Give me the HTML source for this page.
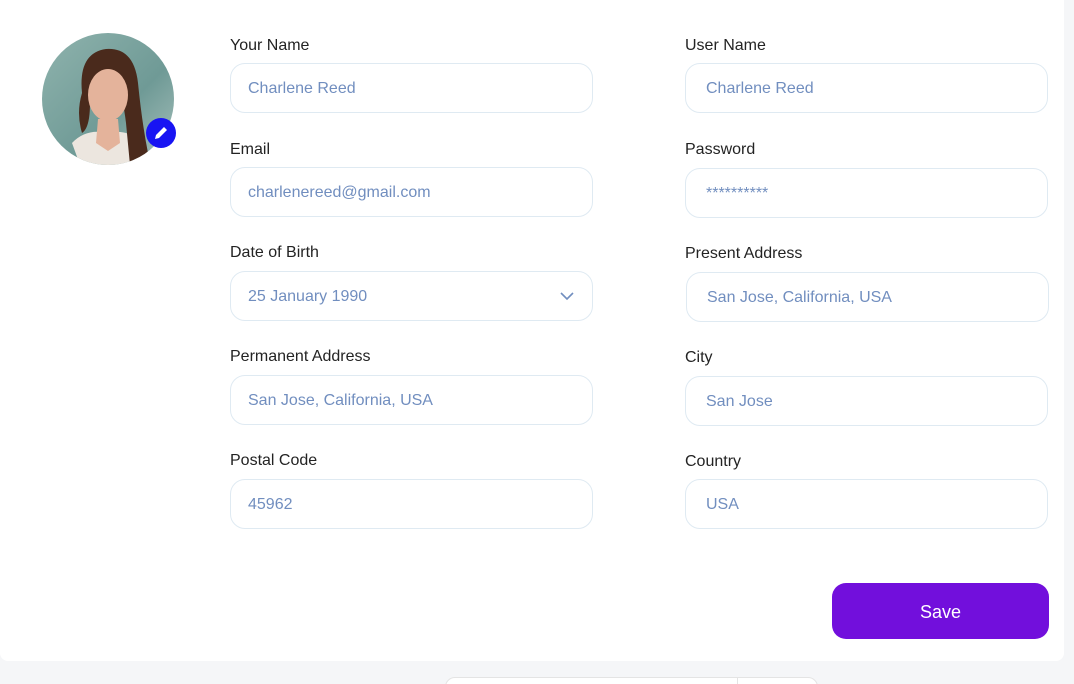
<!DOCTYPE html>
<html><head><meta charset="utf-8"><style>
*{box-sizing:border-box;margin:0;padding:0}
html,body{width:1074px;height:684px;overflow:hidden}
body{background:#f5f6f8;font-family:"Liberation Sans",sans-serif;position:relative}
.card{position:absolute;left:0;top:-20px;width:1064px;height:681px;background:#fff;border-radius:0 0 8px 8px}
.lbl{position:absolute;font-size:16px;color:#232323}
.in{position:absolute;width:363px;height:50px;border:1px solid #dfeaf2;border-radius:15px;font-size:16px;color:#718ebf;padding-left:17px;line-height:50px}
.av{position:absolute;left:42px;top:33px;width:132px;height:132px;border-radius:50%;overflow:hidden;background:linear-gradient(135deg,#8fb3ad,#6f9a96 60%,#a9c2bd)}
.btn{position:absolute;left:832px;top:583px;width:217px;height:56px;border-radius:14px;background:#720fdc;color:#fff;font-size:18px;text-align:center;line-height:58px}
.bot{position:absolute;left:445px;top:677px;width:373px;height:20px;background:#fff;border:1px solid #e4e4e4;border-radius:16px}
</style></head><body>
<div class="card"></div>
<div class="av">
<svg width="132" height="132" viewBox="0 0 132 132">
<path d="M38 132 L30 110 Q44 95 66 100 Q88 95 100 112 L96 132Z" fill="#ece6df"/>
<path d="M40 60 Q36 20 64 16 Q92 14 96 50 Q100 90 106 120 Q100 132 88 132 L84 90 Q78 40 62 40 Q50 44 48 70 Q48 95 40 100 Q34 80 40 60Z" fill="#4a2a1c"/>
<ellipse cx="66" cy="62" rx="20" ry="26" fill="#e4b39b"/>
<path d="M56 86 L76 86 L78 110 L66 118 L54 110Z" fill="#e4b39b"/>
</svg></div>
<svg style="position:absolute;left:146px;top:118px" width="30" height="30" viewBox="0 0 30 30"><circle cx="15" cy="15" r="15" fill="#1814f3"/><path d="M9 21 L10 17 L18 9 L21 12 L13 20Z" fill="#fff"/></svg>

<div class="lbl" style="left:230px;top:37px">Your Name</div><div class="in" style="left:230px;top:63px">Charlene Reed</div>
<div class="lbl" style="left:230px;top:141px">Email</div><div class="in" style="left:230px;top:167px">charlenereed@gmail.com</div>
<div class="lbl" style="left:230px;top:244px">Date of Birth</div><div class="in" style="left:230px;top:271px">25 January 1990<svg style="position:absolute;right:18px;top:20px" width="14" height="9" viewBox="0 0 14 9"><path d="M1 1 L7 7 L13 1" stroke="#718ebf" stroke-width="1.6" fill="none"/></svg></div>
<div class="lbl" style="left:230px;top:348px">Permanent Address</div><div class="in" style="left:230px;top:375px">San Jose, California, USA</div>
<div class="lbl" style="left:230px;top:452px">Postal Code</div><div class="in" style="left:230px;top:479px">45962</div>

<div class="lbl" style="left:685px;top:37px">User Name</div><div class="in" style="left:685px;top:63px;padding-left:20px">Charlene Reed</div>
<div class="lbl" style="left:685px;top:141px">Password</div><div class="in" style="left:685px;top:168px;padding-left:20px">**********</div>
<div class="lbl" style="left:685px;top:245px">Present Address</div><div class="in" style="left:686px;top:272px;padding-left:20px">San Jose, California, USA</div>
<div class="lbl" style="left:685px;top:349px">City</div><div class="in" style="left:685px;top:376px;padding-left:20px">San Jose</div>
<div class="lbl" style="left:685px;top:453px">Country</div><div class="in" style="left:685px;top:479px;padding-left:20px">USA</div>

<div class="btn">Save</div>
<div class="bot"><div style="position:absolute;left:291px;top:0;width:1px;height:20px;background:#e4e4e4"></div></div>
</body></html>
